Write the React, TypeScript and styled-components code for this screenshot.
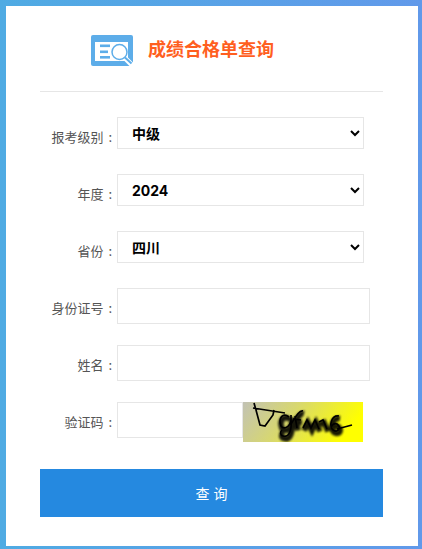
import React from "react";
import styled, { createGlobalStyle } from "styled-components";

const Global = createGlobalStyle`
  html, body { margin: 0; padding: 0; background: #fff; }
  body { font-family: "Noto Sans CJK SC", "Liberation Sans", sans-serif; overflow: hidden; }
  * { box-sizing: border-box; }
`;

const Frame = styled.div`
  width: 422px;
  height: 549px;
  padding: 6px 4px 3px 6px;
  background: linear-gradient(90deg, #4fabe3 0%, #6199ea 100%);
  overflow: hidden;
`;

const Panel = styled.main`
  height: 100%;
  background: #fff;
  padding: 0 35px 0 34px;
`;

const Header = styled.header`
  height: 86px;
  border-bottom: 1px solid #e6e6e6;
  display: flex;
  align-items: center;
  padding: 4px 0 0 51px;
  gap: 15px;
  margin-bottom: 25px;
`;

const LogoIcon = styled.svg`
  width: 42px;
  height: 31px;
  flex: none;
`;

const Title = styled.h1`
  margin: 0 0 5px;
  font-size: 18px;
  font-weight: 700;
  line-height: 24px;
  color: #ff5f1f;
`;

const Row = styled.div<{ $height: number; $after: number }>`
  display: flex;
  align-items: flex-start;
  height: ${(p) => p.$height}px;
  margin-bottom: ${(p) => p.$after}px;
`;

const Label = styled.label`
  width: 77px;
  flex: none;
  text-align: right;
  font-size: 13px;
  line-height: 39px;
  color: #555;
  white-space: pre;
  padding-right: 5px;
  word-spacing: 2px;
`;

const Select = styled.select`
  width: 247px;
  height: 32px;
  border: 1px solid #e6e6e6;
  background: #fff;
  color: #000;
  font-family: Inter, "Noto Sans CJK SC", sans-serif;
  font-size: 14px;
  font-weight: 700;
  padding: 0 10px;
  outline: none;
  border-radius: 0;
`;

const TextInput = styled.input<{ $width: number }>`
  width: ${(p) => p.$width}px;
  height: 36px;
  border: 1px solid #e6e6e6;
  background: #fff;
  padding: 0 10px;
  outline: none;
  flex: none;
`;

const Captcha = styled.svg`
  width: 120px;
  height: 40px;
  display: block;
  flex: none;
`;

const Submit = styled.button`
  display: block;
  width: 343px;
  height: 48px;
  margin-top: 27px;
  padding: 0 0 0 4px;
  border: 0;
  background: #2589e0;
  color: #fff;
  font-family: inherit;
  font-size: 14px;
  letter-spacing: 4px;
`;

const Logo = () => (
  <LogoIcon viewBox="0 0 42 31">
    <defs>
      <filter id="soft" x="-5%" y="-5%" width="110%" height="110%">
        <feGaussianBlur stdDeviation="0.3" />
      </filter>
    </defs>
    <g filter="url(#soft)">
      <rect x="0" y="0" width="42" height="31" rx="2" fill="#5dade9" />
      <rect x="4" y="7" width="33" height="19" fill="#fff" />
      <rect x="9" y="9.5" width="10" height="2.6" fill="#5dade9" />
      <rect x="9" y="15.5" width="8" height="2.6" fill="#5dade9" />
      <rect x="9" y="21" width="10" height="2.6" fill="#5dade9" />
      <path d="M33 22 L42 31" stroke="#fff" strokeWidth="5" />
      <circle cx="28.5" cy="17" r="7.5" fill="#fff" stroke="#5dade9" strokeWidth="1.5" />
      <path d="M34 22.5 L40.5 28.5" stroke="#5dade9" strokeWidth="2" />
    </g>
  </LogoIcon>
);

const frontStrokes =
  "M11 1 L13 8 L17 23 L22 24 L30 13 L31 8 M10 6 L42 11 M46 15 C40 10 35 16 38 24 C41 28 47 25 48 18 L48 13 M48 18 C49 28 46 36 40 34 C37 33 37 30 39 28 M48 22 C52 16 56 8 60 9 M50 17 L58 18 M52 14 L54 26 M60 26 L64 18 L68 26 L72 18 L76 27 M76 20 L80 18 L84 27 M96 14 C88 13 86 24 90 28 C95 31 99 26 94 22 C91 21 89 23 88 25 M94 27 L109 23";

const shadowStrokes =
  "M46 15 C40 10 35 16 38 24 C41 28 47 25 48 18 L48 13 M48 18 C49 28 46 36 40 34 C37 33 37 30 39 28 M48 22 C52 16 56 8 60 9 M50 17 L58 18 M52 14 L54 26 M60 26 L64 18 L68 26 L72 18 L76 27 M76 20 L80 18 L84 27 M96 14 C88 13 86 24 90 28 C95 31 99 26 94 22 C91 21 89 23 88 25";

const CaptchaImage = () => (
  <Captcha viewBox="0 0 120 40" aria-label="验证码">
    <defs>
      <linearGradient id="cg" x1="0" x2="1" y1="0" y2="0.25">
        <stop offset="0" stopColor="#c2c2b4" />
        <stop offset="0.45" stopColor="#d8d86e" />
        <stop offset="1" stopColor="#ffff00" />
      </linearGradient>
      <filter id="bl" x="-10%" y="-30%" width="120%" height="160%">
        <feGaussianBlur stdDeviation="1.2" />
      </filter>
      <filter id="s2" x="-10%" y="-30%" width="120%" height="160%">
        <feGaussianBlur stdDeviation="0.4" />
      </filter>
    </defs>
    <rect width="120" height="40" fill="url(#cg)" />
    <path d={shadowStrokes} transform="translate(1 2.5)" fill="none" stroke="#000" strokeWidth="5.5" opacity="0.9" filter="url(#bl)" />
    <path d={frontStrokes} fill="none" stroke="#000" strokeWidth="1.7" filter="url(#s2)" />
  </Captcha>
);

const selects = [
  { label: "报考级别 :", options: ["中级", "初级", "高级"] },
  { label: "年度 :", options: ["2024", "2023"] },
  { label: "省份 :", options: ["四川", "北京"] },
];

export default function App() {
  return (
    <Frame>
      <Global />
      <Panel>
        <Header>
          <Logo />
          <Title>成绩合格单查询</Title>
        </Header>
        {selects.map((s) => (
          <Row key={s.label} $height={32} $after={25}>
            <Label>{s.label}</Label>
            <Select defaultValue={s.options[0]}>
              {s.options.map((o) => (
                <option key={o}>{o}</option>
              ))}
            </Select>
          </Row>
        ))}
        <Row $height={36} $after={21}>
          <Label>身份证号 :</Label>
          <TextInput $width={253} />
        </Row>
        <Row $height={36} $after={21}>
          <Label>姓名 :</Label>
          <TextInput $width={253} />
        </Row>
        <Row $height={40} $after={0}>
          <Label>验证码 :</Label>
          <TextInput $width={126} />
          <CaptchaImage />
        </Row>
        <Submit>查询</Submit>
      </Panel>
    </Frame>
  );
}
